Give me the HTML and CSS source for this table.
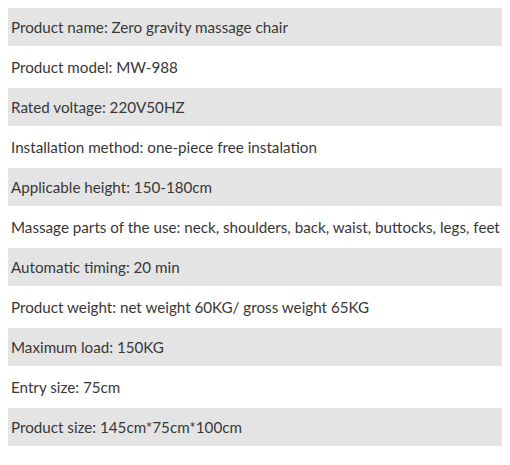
FILE: index.html
```html
<!DOCTYPE html>
<html lang="en">
<head>
<meta charset="utf-8">
<title>Product specifications</title>
<link rel="stylesheet" href="styles.css">
</head>
<body>
<ul class="spec-list">
  <li class="spec-row shaded">Product name: Zero gravity massage chair</li>
  <li class="spec-row">Product model: MW-988</li>
  <li class="spec-row shaded">Rated voltage: 220V50HZ</li>
  <li class="spec-row">Installation method: one-piece free instalation</li>
  <li class="spec-row shaded">Applicable height: 150-180cm</li>
  <li class="spec-row">Massage parts of the use: neck, shoulders, back, waist, buttocks, legs, feet</li>
  <li class="spec-row shaded">Automatic timing: 20 min</li>
  <li class="spec-row">Product weight: net weight 60KG/ gross weight 65KG</li>
  <li class="spec-row shaded">Maximum load: 150KG</li>
  <li class="spec-row">Entry size: 75cm</li>
  <li class="spec-row shaded">Product size: 145cm*75cm*100cm</li>
</ul>
</body>
</html>
```
FILE: styles.css
```css
html, body {
  background: #ffffff;
}
body {
  margin: 8px;
  font-family: Lato, "Liberation Sans", sans-serif;
  color: #383838;
}
.spec-list {
  list-style: none;
  margin: 0;
  padding: 0;
  display: flex;
  flex-direction: column;
  gap: 2px;
}
.spec-row {
  height: 38px;
  line-height: 38px;
  padding-left: 3px;
  font-size: 15.2px;
  white-space: nowrap;
}
.shaded {
  background: #e4e4e4;
}
```
